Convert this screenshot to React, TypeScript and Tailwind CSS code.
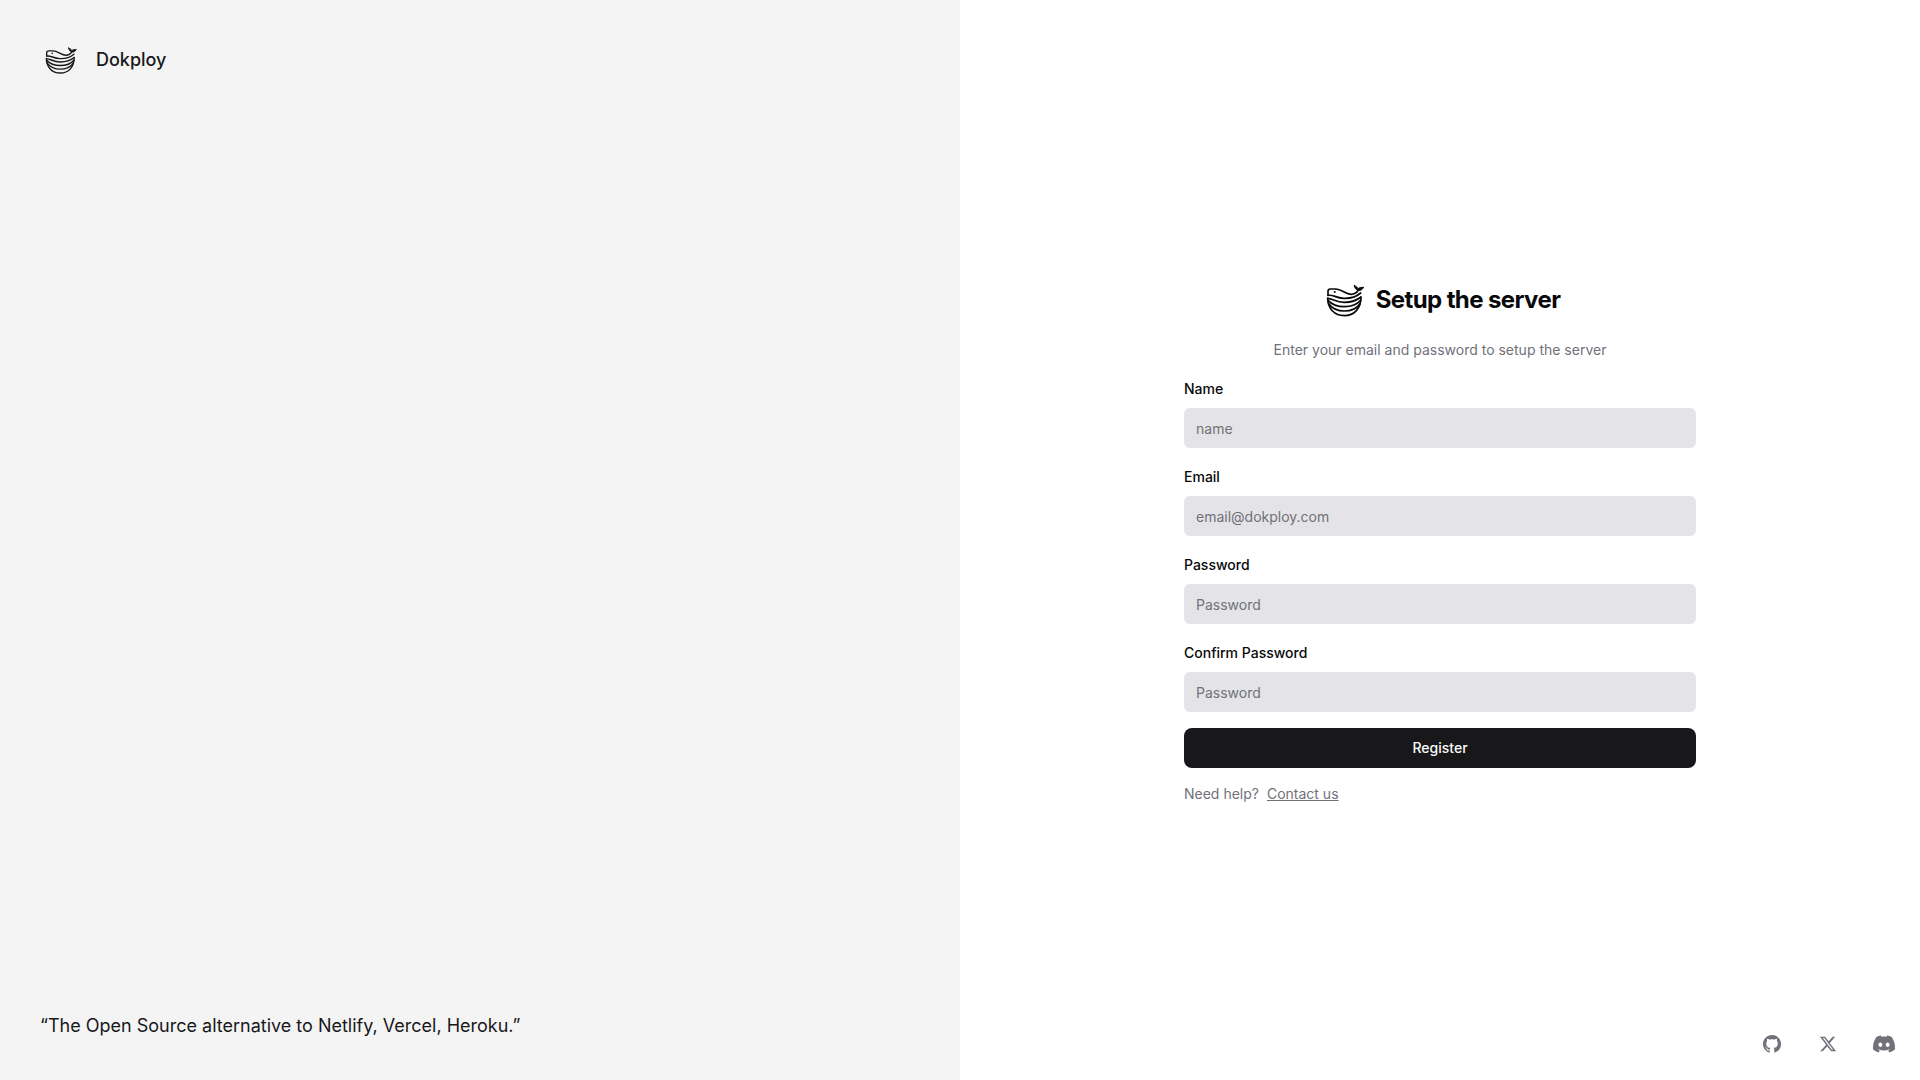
import React from "react";
import { BsGithub } from "react-icons/bs";
import { FaDiscord, FaXTwitter } from "react-icons/fa6";

interface Field {
  id: string;
  label: string;
  type: string;
  placeholder: string;
}

const fields: Field[] = [
  { id: "name", label: "Name", type: "text", placeholder: "name" },
  { id: "email", label: "Email", type: "email", placeholder: "email@dokploy.com" },
  { id: "password", label: "Password", type: "password", placeholder: "Password" },
  { id: "confirmPassword", label: "Confirm Password", type: "password", placeholder: "Password" },
];

const Logo: React.FC<{ className?: string }> = ({ className }) => {
  return (
    <svg
      viewBox="15 3 144 144"
      className={className}
      fill="none"
      stroke="currentColor"
      strokeWidth="5"
      strokeLinecap="round"
      strokeLinejoin="round"
      aria-hidden="true"
    >
      {/* whale */}
      <path d="M39 61V49Q39 42 46 42H62C78 42 92 57 108 58C118 58 126 52 130 46" />
      <path d="M39 61C54 58 62 69 86 70C106 71 124 65 137 54" />
      <path
        d="M118 32C119 39 122 43 128 46C136 48 142 44 146 37C140 37 134 37 129 41C127 36 123 33 118 32Z"
        fill="currentColor"
        strokeWidth="3"
      />
      <circle cx="59" cy="51" r="3" fill="currentColor" stroke="none" />
      {/* hull */}
      <path d="M38 70C54 71 62 82 88 82C112 82 126 76 138 66" />
      <path d="M39 76C50 88 66 95 88 95C110 95 127 88 137 76" />
      <path d="M41 86C52 101 68 108 88 108C108 108 125 101 135 86" />
      <path d="M38 70C38 100 58 122 88 122C118 122 138 100 138 67" />
    </svg>
  );
};

const socialClass =
  "flex h-10 w-14 items-center justify-center text-[#71717a] hover:text-zinc-900";

const App: React.FC = () => {
  return (
    <div className="grid min-h-screen grid-cols-1 bg-white font-['Inter',sans-serif] text-zinc-950 lg:grid-cols-2">
      <aside className="hidden flex-col justify-between bg-[#f4f4f4] p-10 text-zinc-900 lg:flex">
        <a href="#" className="flex items-center gap-4 text-lg font-medium">
          <Logo className="size-10" />
          Dokploy
        </a>
        <blockquote className="text-lg">
          &ldquo;The Open Source alternative to Netlify, Vercel, Heroku.&rdquo;
        </blockquote>
      </aside>

      <main className="grid grid-rows-[1fr_auto_1fr]">
        <div className="row-start-2 mx-auto flex w-full max-w-lg flex-col gap-4">
          <h1 className="flex h-12 items-center justify-center gap-2 text-2xl font-bold tracking-tight">
            <Logo className="size-12" />
            Setup the server
          </h1>
          <p className="text-center text-sm text-[#71717a]">
            Enter your email and password to setup the server
          </p>
          <form className="flex flex-col gap-4">
            {fields.map((field) => (
              <div key={field.id}>
                <label htmlFor={field.id} className="text-sm leading-none font-medium">
                  {field.label}
                </label>
                <input
                  id={field.id}
                  type={field.type}
                  placeholder={field.placeholder}
                  className="mt-2 block h-10 w-full rounded-md bg-[#e4e4e6] px-3 text-sm placeholder:text-[#71717a]"
                />
              </div>
            ))}
            <button
              type="submit"
              className="h-10 w-full rounded-lg bg-[#18181b] text-sm font-medium text-zinc-50 hover:bg-zinc-800"
            >
              Register
            </button>
          </form>
          <p className="flex gap-2 text-sm text-[#71717a]">
            Need help?
            <a href="#" className="underline">
              Contact us
            </a>
          </p>
        </div>

        <nav className="row-start-3 flex items-end justify-end pr-2 pb-4">
          <a href="#" aria-label="GitHub" className={socialClass}>
            <BsGithub size={18} />
          </a>
          <a href="#" aria-label="X" className={socialClass}>
            <FaXTwitter size={18} />
          </a>
          <a href="#" aria-label="Discord" className={socialClass}>
            <FaDiscord size={24} />
          </a>
        </nav>
      </main>
    </div>
  );
};

export default App;
